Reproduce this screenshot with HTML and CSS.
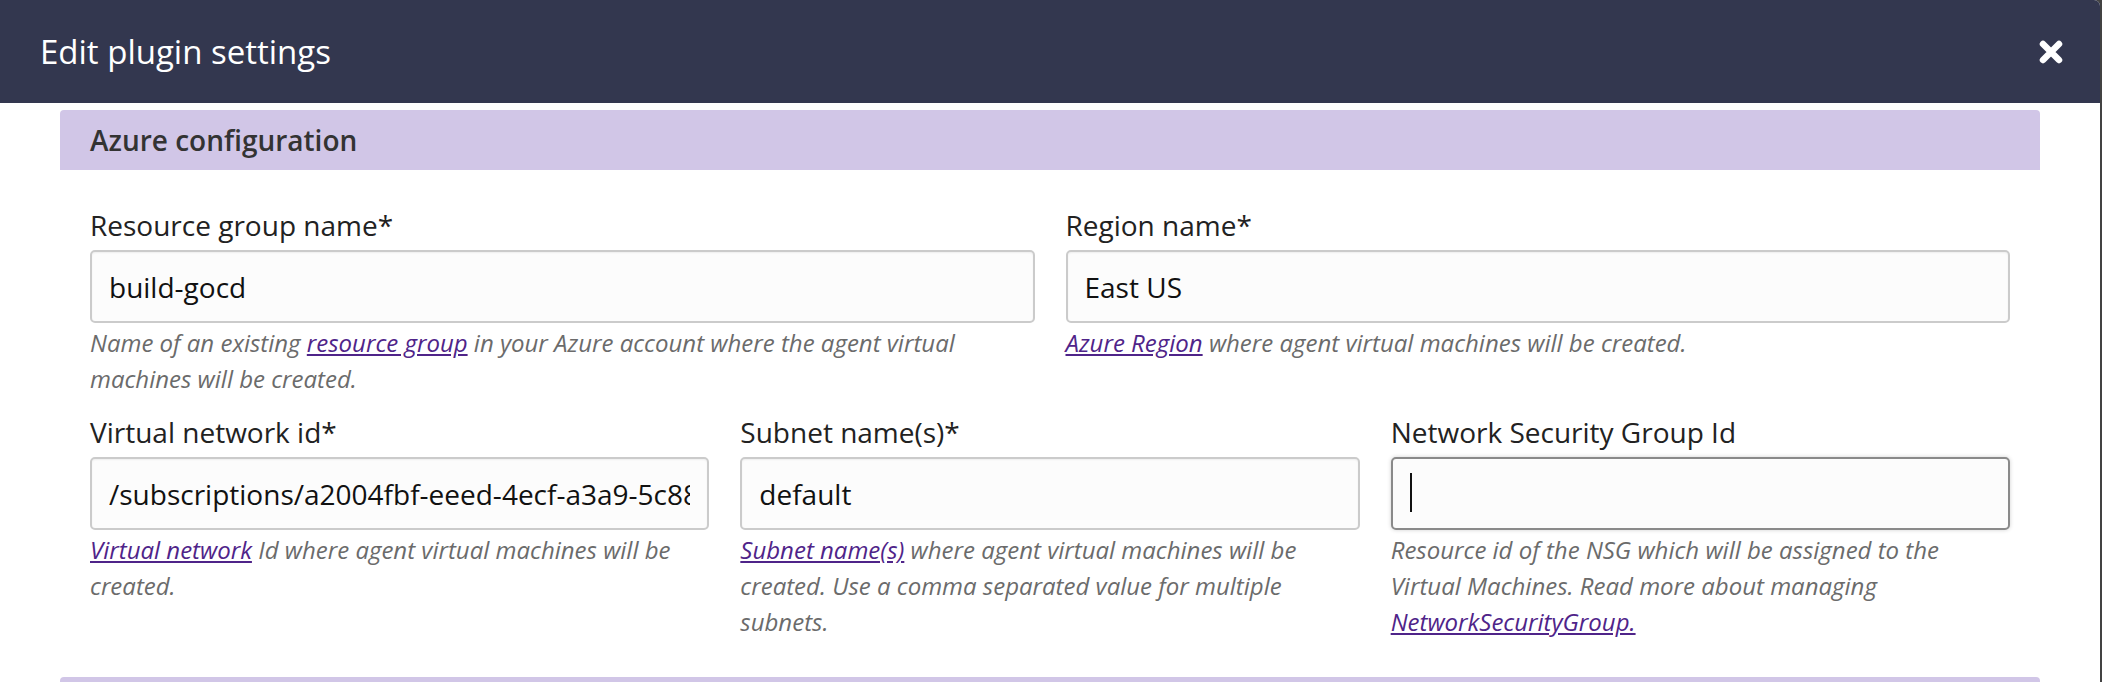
FILE: index.html
```html
<!DOCTYPE html>
<html lang="en">
<head>
<meta charset="utf-8">
<title>Edit plugin settings</title>
<link rel="stylesheet" href="styles.css">
</head>
<body>
<div class="modal">
  <header class="modal-header">
    <h1 class="modal-title">Edit plugin settings</h1>
    <button class="close" aria-label="Close">
      <svg viewBox="0 0 24 24" width="24" height="24" aria-hidden="true">
        <path d="M4 4 L20 20 M20 4 L4 20" stroke="#fff" stroke-width="6.5" stroke-linecap="round" fill="none"/>
      </svg>
    </button>
  </header>
  <div class="modal-body">
    <section class="panel">
      <h2 class="panel-title">Azure configuration</h2>
      <div class="panel-body">
        <div class="row row-2">
          <div class="field">
            <label class="label">Resource group name*</label>
            <input class="input" type="text" value="build-gocd">
            <p class="help">Name of an existing <a href="#">resource group</a> in your Azure account where the agent virtual machines will be created.</p>
          </div>
          <div class="field">
            <label class="label">Region name*</label>
            <input class="input" type="text" value="East US">
            <p class="help"><a href="#">Azure Region</a> where agent virtual machines will be created.</p>
          </div>
        </div>
        <div class="row row-3">
          <div class="field">
            <label class="label">Virtual network id*</label>
            <input class="input" type="text" value="/subscriptions/a2004fbf-eeed-4ecf-a3a9-5c88e2f5d3b1/resourceGroups/build-gocd/providers/Microsoft.Network/virtualNetworks/build-gocd-vnet">
            <p class="help"><a href="#">Virtual network</a> Id where agent virtual machines will be created.</p>
          </div>
          <div class="field">
            <label class="label">Subnet name(s)*</label>
            <input class="input" type="text" value="default">
            <p class="help"><a href="#">Subnet name(s)</a> where agent virtual machines will be created. Use a comma separated value for multiple subnets.</p>
          </div>
          <div class="field">
            <label class="label">Network Security Group Id</label>
            <div class="input-wrap">
              <input class="input input-focused" type="text" value="">
              <span class="caret"></span>
            </div>
            <p class="help">Resource id of the NSG which will be assigned to the Virtual Machines. Read more about managing <a href="#">NetworkSecurityGroup.</a></p>
          </div>
        </div>
      </div>
    </section>
    <section class="panel">
      <h2 class="panel-title">Agent configuration</h2>
    </section>
  </div>
</div>
</body>
</html>
```
FILE: styles.css
```css
html, body {
  margin: 0;
  padding: 0;
}
body {
  width: 2102px;
  height: 682px;
  overflow: hidden;
  background: #434343;
  font-family: "Open Sans", "Liberation Sans", sans-serif;
}
.modal {
  width: 2100px;
  height: 682px;
  background: #fff;
  border-top-right-radius: 6px;
  overflow: hidden;
}
.modal-header {
  height: 103px;
  background: #33374f;
  display: flex;
  align-items: center;
  justify-content: space-between;
  padding: 0 37px 0 40px;
  box-sizing: border-box;
}
.modal-title {
  margin: 0;
  color: #fff;
  font-size: 33px;
  font-weight: 400;
  line-height: 1;
}
.close {
  border: 0;
  background: none;
  padding: 0;
  width: 24px;
  height: 24px;
  display: flex;
  cursor: pointer;
}
.modal-body {
  padding: 7px 60px 0 60px;
}
.panel-title {
  margin: 0;
  height: 60px;
  line-height: 60px;
  padding: 0 30px;
  background: #d1c6e7;
  border-radius: 4px 4px 0 0;
  color: #333;
  font-size: 28px;
  font-weight: 600;
}
.panel-body {
  padding: 37px 30px 37px;
  display: flex;
  flex-direction: column;
  gap: 17px;
}
.row {
  display: grid;
  column-gap: 31px;
}
.row-2 {
  grid-template-columns: 1fr 1fr;
}
.row-3 {
  grid-template-columns: 1fr 1fr 1fr;
}
.field {
  display: flex;
  flex-direction: column;
  min-width: 0;
}
.label {
  font-size: 28px;
  line-height: 36px;
  color: #222;
  margin-bottom: 7px;
}
.input {
  box-sizing: border-box;
  width: 100%;
  height: 73px;
  border: 2px solid #cbcbcb;
  border-radius: 5px;
  background: #fcfcfc;
  box-shadow: inset 0 1px 2px rgba(0, 0, 0, 0.06);
  padding: 0 17px;
  font-family: "Open Sans", "Liberation Sans", sans-serif;
  font-size: 28px;
  color: #111;
  outline: none;
}
.input-wrap {
  position: relative;
}
.input-focused {
  border-color: #8a8a8a;
  box-shadow: 0 0 4px rgba(0, 0, 0, 0.18);
}
.caret {
  position: absolute;
  left: 19px;
  top: 16px;
  width: 2px;
  height: 39px;
  background: #111;
}
.help {
  margin: 2px 0 0;
  font-size: 24px;
  line-height: 36px;
  font-style: italic;
  color: #6b6b6b;
}
.help a {
  color: #4f2489;
  text-decoration: underline;
}
```
